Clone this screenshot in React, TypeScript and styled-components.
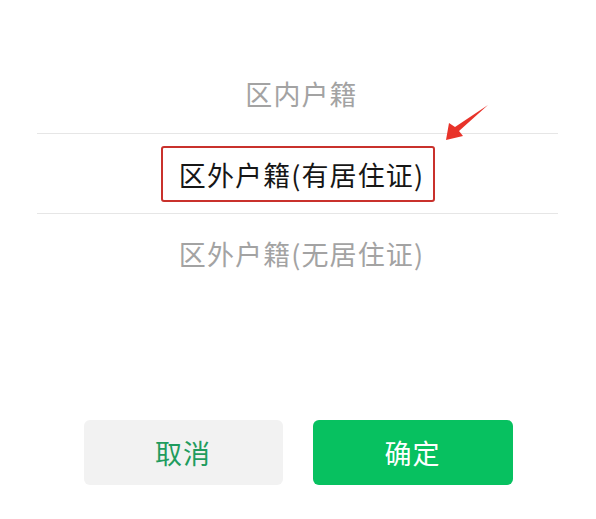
import React from "react";
import styled, { createGlobalStyle } from "styled-components";

const Global = createGlobalStyle`
  html, body { margin: 0; padding: 0; background: #ffffff; }
  body { font-family: "Noto Sans CJK SC", "Noto Sans", sans-serif; }
`;

const Page = styled.div`
  position: relative;
  width: 596px;
  height: 519px;
  background: #ffffff;
  display: flex;
  flex-direction: column;
`;

const List = styled.div`
  margin-top: 53px;
  padding: 0 38px 0 37px;
  display: flex;
  flex-direction: column;
`;

const Row = styled.div<{ $divider?: boolean }>`
  height: 80px;
  display: flex;
  align-items: center;
  justify-content: center;
  border-top: ${(p) => (p.$divider ? "1px solid #e6e6e6" : "none")};
  box-sizing: border-box;
`;

const Label = styled.span<{ $active?: boolean }>`
  font-size: 27px;
  line-height: 1;
  color: ${(p) => (p.$active ? "#161616" : "#a3a3a3")};
  letter-spacing: 1.1px;
  white-space: nowrap;
  margin-left: 8px;
`;

const Highlight = styled.span`
  display: inline-flex;
  align-items: center;
  justify-content: center;
  width: 274px;
  height: 56px;
  box-sizing: border-box;
  border: 2px solid #c9312c;
  border-radius: 3px;
  margin-top: 1px;
`;

const Arrow = styled.svg`
  position: absolute;
  left: 440px;
  top: 100px;
  width: 52px;
  height: 45px;
`;

const Actions = styled.div`
  margin-top: 127px;
  display: flex;
  justify-content: center;
  gap: 30px;
`;

const Button = styled.button<{ $primary?: boolean }>`
  width: ${(p) => (p.$primary ? "200px" : "199px")};
  height: 65px;
  border: none;
  border-radius: 6px;
  font-family: "Noto Sans CJK SC", "Noto Sans", sans-serif;
  font-size: 27px;
  font-weight: 400;
  letter-spacing: 1px;
  background: ${(p) => (p.$primary ? "#07c160" : "#f2f2f2")};
  color: ${(p) => (p.$primary ? "#ffffff" : "#1f9c5e")};
  display: flex;
  align-items: center;
  justify-content: center;
`;

export default function App() {
  return (
    <Page>
      <Global />
      <List>
        <Row>
          <Label>区内户籍</Label>
        </Row>
        <Row $divider>
          <Highlight>
            <Label $active>区外户籍(有居住证)</Label>
          </Highlight>
        </Row>
        <Row $divider>
          <Label>区外户籍(无居住证)</Label>
        </Row>
      </List>
      <Actions>
        <Button>取消</Button>
        <Button $primary>确定</Button>
      </Actions>
      <Arrow viewBox="0 0 52 45">
        <polygon
          points="6,40 9,23 15,27 48,5 19,31 23,36"
          fill="#e8332a"
        />
      </Arrow>
    </Page>
  );
}
